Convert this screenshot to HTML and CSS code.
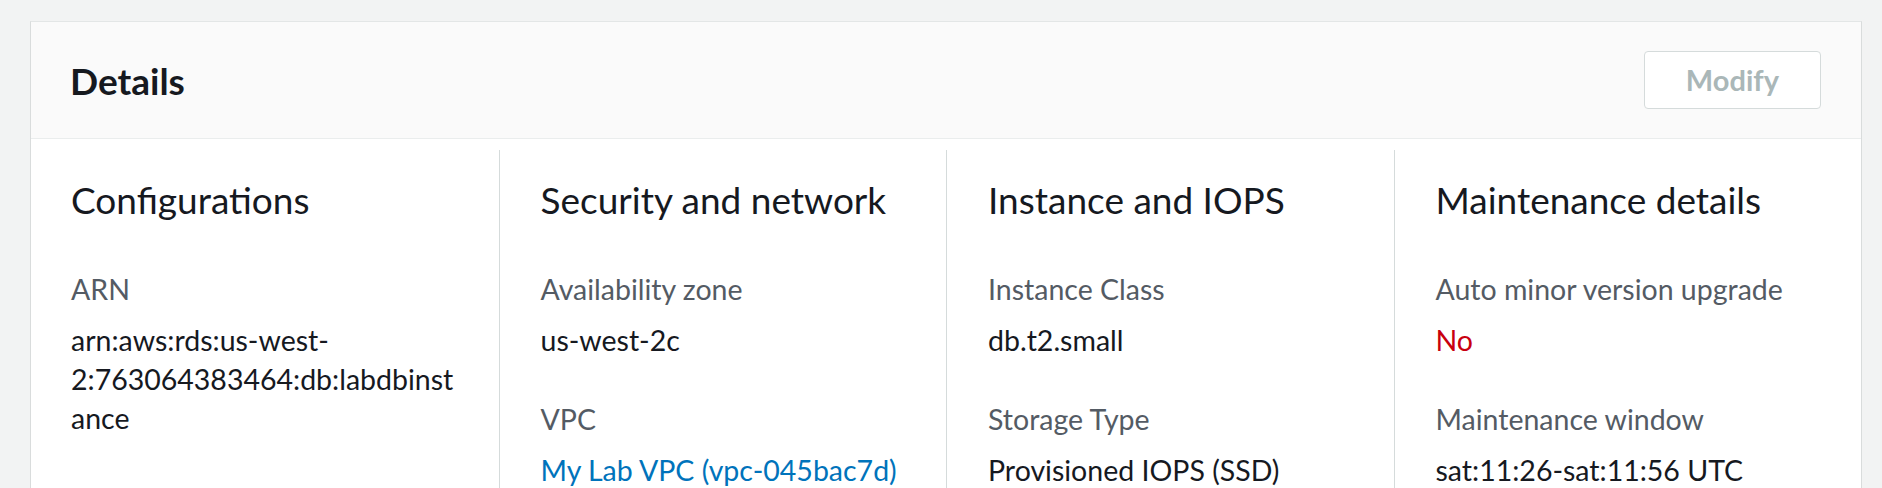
FILE: index.html
```html
<!DOCTYPE html>
<html lang="en">
<head>
<meta charset="utf-8">
<title>Details</title>
<link rel="stylesheet" href="styles.css">
</head>
<body>
<div class="page">
  <section class="card">
    <header class="card-header">
      <h2 class="card-title">Details</h2>
      <button class="btn" type="button" disabled>Modify</button>
    </header>
    <div class="card-body">
      <div class="col">
        <h3 class="col-title">Configurations</h3>
        <div class="field">
          <div class="label">ARN</div>
          <div class="value arn">arn:aws:rds:us-west-2:763064383464:db:labdbinstance</div>
        </div>
      </div>
      <div class="col">
        <h3 class="col-title">Security and network</h3>
        <div class="field">
          <div class="label">Availability zone</div>
          <div class="value">us-west-2c</div>
        </div>
        <div class="field">
          <div class="label">VPC</div>
          <div class="value"><a class="link" href="#">My Lab VPC (vpc-045bac7d)</a></div>
        </div>
      </div>
      <div class="col">
        <h3 class="col-title">Instance and IOPS</h3>
        <div class="field">
          <div class="label">Instance Class</div>
          <div class="value">db.t2.small</div>
        </div>
        <div class="field">
          <div class="label">Storage Type</div>
          <div class="value">Provisioned IOPS (SSD)</div>
        </div>
      </div>
      <div class="col">
        <h3 class="col-title">Maintenance details</h3>
        <div class="field">
          <div class="label">Auto minor version upgrade</div>
          <div class="value negative">No</div>
        </div>
        <div class="field">
          <div class="label">Maintenance window</div>
          <div class="value">sat:11:26-sat:11:56 UTC</div>
        </div>
      </div>
    </div>
  </section>
</div>
</body>
</html>
```
FILE: styles.css
```css
html, body {
  margin: 0;
  padding: 0;
  background: #f2f3f3;
}

body {
  font-family: Lato, "Open Sans", sans-serif;
  color: #16191f;
}

.page {
  padding: 21px 20px 0 30px;
}

.card {
  background: #ffffff;
  border: 1px solid #e3e6e6;
  border-left-color: #d9dcdc;
  border-right-color: #d9dcdc;
}

.card-header {
  height: 116px;
  display: flex;
  align-items: center;
  justify-content: space-between;
  padding: 0 40px 0 39px;
  background: #fafafa;
  border-bottom: 1px solid #eaeded;
}

.card-title {
  margin: 0;
  font-size: 37px;
  font-weight: 700;
  color: #16191f;
}

.btn {
  font-family: Lato, "Open Sans", sans-serif;
  font-size: 29px;
  font-weight: 700;
  color: #aab7b8;
  background: #ffffff;
  border: 1px solid #d5dbdb;
  border-radius: 4px;
  height: 58px;
  padding: 0 41px;
  line-height: 56px;
}

.card-body {
  display: grid;
  grid-template-columns: repeat(4, 1fr);
  padding: 11px 20px 0 20px;
}

.col {
  padding: 28px 40px 40px 20px;
  min-width: 0;
}

.col + .col {
  border-left: 1px solid #d5dbdb;
  padding-left: 41px;
}

.col-title {
  margin: 0 0 48px 0;
  font-size: 37px;
  font-weight: 400;
  line-height: 44px;
  color: #16191f;
}

.field + .field {
  margin-top: 40px;
}

.label {
  font-size: 28.5px;
  line-height: 39px;
  color: #545b64;
  margin-bottom: 12px;
}

.value {
  font-size: 28.5px;
  line-height: 39px;
  color: #16191f;
}

.arn {
  overflow-wrap: break-word;
}

.link {
  color: #0073bb;
  text-decoration: none;
}

.negative {
  color: #c9000e;
}
```
